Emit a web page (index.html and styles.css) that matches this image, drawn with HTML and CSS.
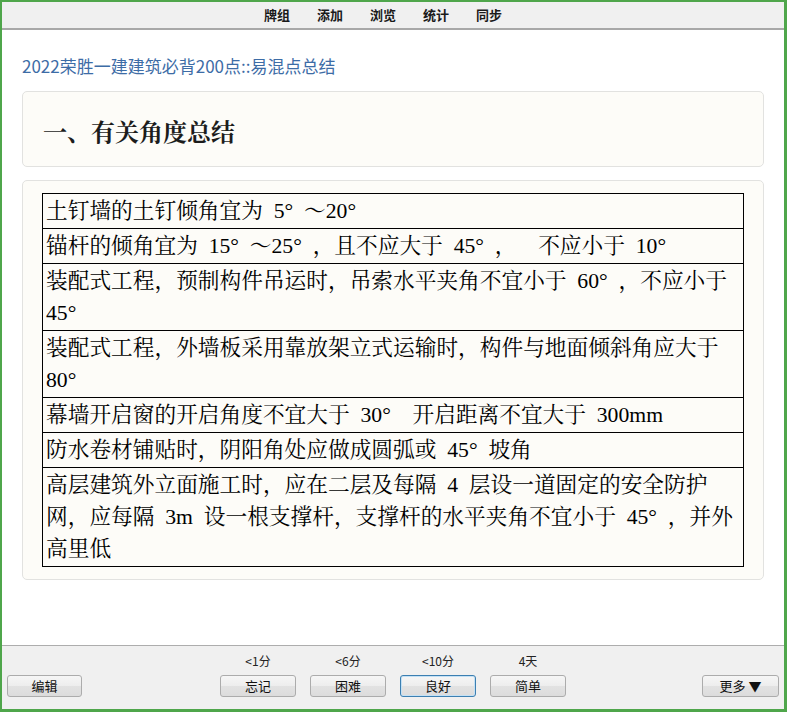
FILE: index.html
```html
<!DOCTYPE html>
<html lang="zh-CN">
<head>
<meta charset="utf-8">
<title>Anki</title>
<link rel="stylesheet" href="styles.css">
</head>
<body>
<div class="window">
  <nav class="topbar">
    <a class="nav-item">牌组</a>
    <a class="nav-item">添加</a>
    <a class="nav-item">浏览</a>
    <a class="nav-item">统计</a>
    <a class="nav-item">同步</a>
  </nav>
  <main class="content">
    <a class="deck-title">2022荣胜一建建筑必背200点::易混点总结</a>
    <section class="card card-head">
      <h1 class="card-heading">一、有关角度总结</h1>
    </section>
    <section class="card card-body">
      <table class="facts">
        <tr><td>土钉墙的土钉倾角宜为 5° ～20°</td></tr>
        <tr><td>锚杆的倾角宜为 15° ～25° ，且不应大于 45° ，&nbsp; 不应小于 10°</td></tr>
        <tr><td>装配式工程，预制构件吊运时，吊索水平夹角不宜小于 60° ，不应小于 45°</td></tr>
        <tr><td>装配式工程，外墙板采用靠放架立式运输时，构件与地面倾斜角应大于 80°</td></tr>
        <tr><td>幕墙开启窗的开启角度不宜大于 30° &nbsp;开启距离不宜大于 300mm</td></tr>
        <tr><td>防水卷材铺贴时，阴阳角处应做成圆弧或 45° 坡角</td></tr>
        <tr><td>高层建筑外立面施工时，应在二层及每隔 4 层设一道固定的安全防护网，应每隔 3m 设一根支撑杆，支撑杆的水平夹角不宜小于 45° ，并外高里低</td></tr>
      </table>
    </section>
  </main>
  <footer class="answer-bar">
    <div class="bar-left"><button class="btn">编辑</button></div>
    <div class="ease">
      <div class="ease-col"><span class="ease-time">&lt;1分</span><button class="btn">忘记</button></div>
      <div class="ease-col"><span class="ease-time">&lt;6分</span><button class="btn">困难</button></div>
      <div class="ease-col"><span class="ease-time">&lt;10分</span><button class="btn btn-focus">良好</button></div>
      <div class="ease-col"><span class="ease-time">4天</span><button class="btn">简单</button></div>
    </div>
    <div class="bar-right"><button class="btn btn-more">更多 ▼</button></div>
  </footer>
</div>
</body>
</html>
```

FILE: styles.css
```css
html, body {
  margin: 0;
  padding: 0;
  height: 100%;
}

body {
  font-family: "Noto Sans CJK SC", "Liberation Sans", sans-serif;
  background: #ffffff;
  color: #111;
}

.window {
  box-sizing: border-box;
  width: 787px;
  height: 712px;
  border-style: solid;
  border-color: #4fa64b;
  border-width: 2px 3px 3px 2px;
  display: flex;
  flex-direction: column;
  overflow: hidden;
}

/* top navigation */
.topbar {
  flex: none;
  height: 26px;
  background: #f0f0f0;
  border-bottom: 2px solid #a8a8a8;
  display: flex;
  justify-content: center;
  align-items: center;
  gap: 27px;
  padding-right: 20px;
}

.nav-item {
  font-size: 13px;
  line-height: 16px;
  font-weight: bold;
  color: #1a1a1a;
  text-decoration: none;
}

/* main reviewer area */
.content {
  flex: 1;
  min-height: 0;
  padding: 26px 20px 0 20px;
  overflow: hidden;
  display: flex;
  flex-direction: column;
  align-items: stretch;
}

.deck-title {
  display: block;
  font-size: 17px;
  line-height: 20px;
  color: #3d6ca6;
  text-decoration: none;
  margin-bottom: 15px;
}

.card {
  background: #fdfcf8;
  border: 1px solid #e2e2e0;
  border-radius: 5px;
}

.card-head {
  padding: 23px 20px 19px 20px;
}

.card-heading {
  margin: 0;
  font-family: "Noto Serif CJK SC", "Noto Sans CJK SC", serif;
  font-size: 24px;
  line-height: 32px;
  font-weight: bold;
  color: #1c1c1c;
}

.card-body {
  margin-top: 13px;
  padding: 12px 19px;
}

.facts {
  width: 100%;
  border-collapse: collapse;
  font-family: "Liberation Serif", "Noto Serif CJK SC", "Noto Sans CJK SC", serif;
  font-size: 21.7px;
  line-height: 32px;
  word-spacing: 5.4px;
  color: #000;
}

.facts td {
  border: 1px solid #000;
  padding: 1px 3px;
  text-align: left;
  vertical-align: top;
}

/* answer buttons bar */
.answer-bar {
  flex: none;
  height: 64px;
  box-sizing: border-box;
  border-top: 1px solid #adadad;
  background: #f0f0f0;
  padding: 8px 5px 13px 5px;
  display: grid;
  grid-template-columns: 1fr auto 1fr;
  align-items: end;
}

.bar-left {
  justify-self: start;
}

.bar-right {
  justify-self: end;
}

.ease {
  display: flex;
  gap: 14px;
}

.ease-col {
  width: 76px;
  display: flex;
  flex-direction: column;
  align-items: center;
}

.ease-time {
  font-size: 12px;
  line-height: 14px;
  color: #222;
  margin-bottom: 7px;
}

.btn {
  box-sizing: border-box;
  width: 76px;
  height: 22px;
  padding: 0;
  border: 1px solid #acacac;
  border-radius: 3px;
  background: linear-gradient(#f6f6f6 0%, #ededed 50%, #e2e2e2 51%, #dcdcdc 100%);
  font-family: "Noto Sans CJK SC", sans-serif;
  font-size: 13px;
  line-height: 20px;
  color: #111;
}

.bar-left .btn {
  width: 75px;
}

.btn-more {
  width: 77px;
}

.btn-focus {
  border-color: #3c7fb1;
  box-shadow: inset 0 0 0 1px #c4e1f5;
}
```
